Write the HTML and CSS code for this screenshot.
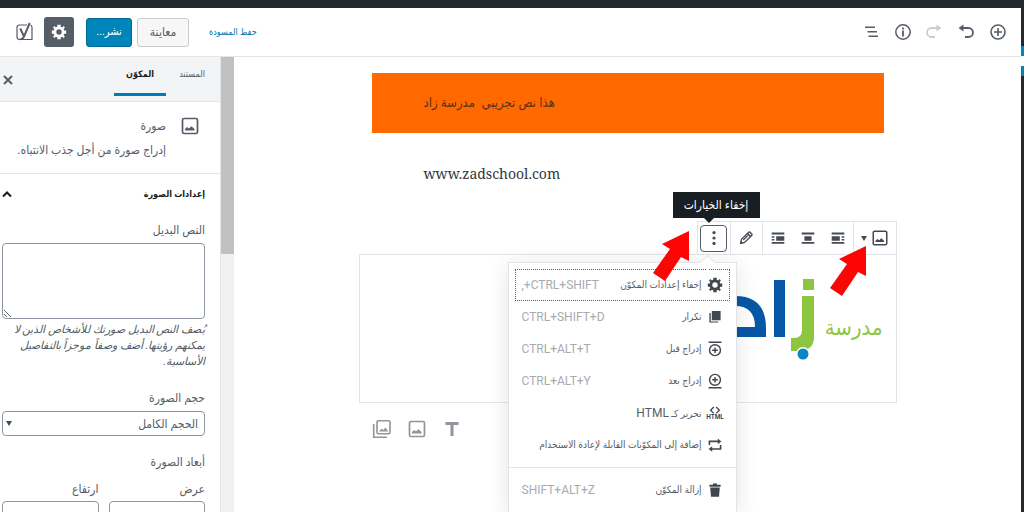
FILE: index.html
```html
<!DOCTYPE html>
<html lang="ar" dir="rtl">
<head>
<meta charset="utf-8">
<title>تحرير المقالة</title>
<link rel="stylesheet" href="styles.css">
</head>
<body>
<svg class="sprite" aria-hidden="true">
  <symbol id="gear" viewBox="0 0 20 20"><path fill-rule="evenodd" d="M18 12h-2.200c-.2.6-.4 1.100-.7 1.600l1.500 1.600-1.600 1.600-1.600-1.500c-.5.3-1 .5-1.500.7V18H8.100v-2.200c-.6-.1-1.100-.3-1.600-.6l-1.600 1.500-1.600-1.600 1.500-1.600c-.3-.5-.5-1-.6-1.600H2V8.200h2.200c.1-.6.3-1.100.6-1.600L3.300 5l1.600-1.600 1.600 1.500c.5-.3 1-.5 1.600-.6V2h3.800v2.300c.6.100 1.100.3 1.600.6l1.600-1.500L16.600 5l-1.500 1.600c.3.5.5 1 .6 1.600H18V12zM10 13a3 3 0 1 0 0-6 3 3 0 0 0 0 6z"/></symbol>
  <symbol id="image" viewBox="0 0 20 20"><rect x="2.500" y="2.500" width="15" height="15" rx="1.500" fill="none" stroke="currentColor" stroke-width="1.700"/><path d="M5 14.500v-1.500l2-2 2 1.500 2.500-2.200 3 2.700v1.500z"/></symbol>
  <symbol id="arrow" viewBox="0 0 38 50"><path fill="#fb0505" d="M36 0 9 13l8 5L0 42l12 8 16-24 8 4z"/></symbol>
</svg>
<div class="adminbar"></div>
<div class="shell">
  <div class="rail"><i></i><i></i></div>
  <div class="editor">
    <header class="topbar">
      <div class="tools">
        <button aria-label="إضافة مكوّن"><svg viewBox="0 0 20 20"><circle cx="10" cy="10" r="7" fill="none" stroke="currentColor" stroke-width="1.600"/><path d="M9.200 6h1.600v3.200H14v1.600h-3.200V14H9.200v-3.200H6V9.200h3.200z"/></svg></button>
        <button aria-label="تراجع"><svg viewBox="0 0 20 20"><path d="M7.500 2.500v7L2.500 6z"/><path d="M6 6h6.500a4.200 4.200 0 0 1 0 9H9" fill="none" stroke="currentColor" stroke-width="1.800"/></svg></button>
        <button class="disabled" aria-label="إعادة"><svg viewBox="0 0 20 20"><path d="M12.500 2.500v7l5-3.500z"/><path d="M14 6H7.500a4.200 4.200 0 0 0 0 9H11" fill="none" stroke="currentColor" stroke-width="1.800"/></svg></button>
        <button aria-label="معلومات"><svg viewBox="0 0 20 20"><circle cx="11" cy="10" r="7.200" fill="none" stroke="currentColor" stroke-width="1.500"/><path d="M10.100 5.500h1.800v1.900h-1.800zM10.100 8.500h1.800v6h-1.800z"/></svg></button>
        <button aria-label="تصفح المكوّنات"><svg viewBox="0 0 20 20"><path d="M5 4.500h10V6H5zM7.500 9H17v1.500H7.500zM8.500 13.500H18V15H8.500z"/></svg></button>
      </div>
      <div class="actions">
        <a href="#">حفظ المسودة</a>
        <button class="btn preview">معاينة</button>
        <button class="btn publish">نشر...</button>
        <button class="settings" aria-label="الإعدادات"><svg><use href="#gear"/></svg></button>
        <button class="seo" aria-label="SEO"><svg viewBox="0 0 20 20"><path d="M13 3H5.500Q3 3 3 5.500v9Q3 17.500 5.500 17.500H18V5.500Q18 3.500 16.500 3" fill="none" stroke="currentColor" stroke-width="1.200"/><path d="m6.200 6.500 3.600 7.500M15.700 1 10 14.500Q9 17.200 6.300 17.200" fill="none" stroke="currentColor" stroke-width="2"/></svg></button>
      </div>
    </header>
    <div class="workspace">
      <main class="canvas">
        <p class="banner">هذا نص تجريبي &nbsp;مدرسة زاد</p>
        <p class="site" dir="ltr">www.zadschool.com</p>
        <section class="block">
          <div class="toolbar">
            <div class="group"><button class="switcher" aria-label="تغيير نوع المكوّن"><svg><use href="#image"/></svg><i class="caret"></i></button></div>
            <div class="group aligns">
              <button aria-label="محاذاة لليمين"><svg viewBox="0 0 20 20"><path d="M3 4h14v2H3zM3 8h9v5H3zM14 8h3v1.700h-3zM14 11h3v1.700h-3zM3 14.500h14v2H3z"/></svg></button>
              <button aria-label="توسيط"><svg viewBox="0 0 20 20"><path d="M3 4h14v2H3zM6 8h8v5H6zM3 14.500h14v2H3z"/></svg></button>
              <button aria-label="محاذاة لليسار"><svg viewBox="0 0 20 20"><path d="M3 4h14v2H3zM8 8h9v5H8zM3 8h3v1.700H3zM3 11h3v1.700H3zM3 14.500h14v2H3z"/></svg></button>
            </div>
            <div class="group"><button class="edit" aria-label="تحرير"><svg viewBox="0 0 20 20"><path d="m4 16 1-4.500 8-8q.7-.5 1.400 0l2.100 2.100q.5.700 0 1.400l-8 8z" fill="none" stroke="currentColor" stroke-width="1.500"/><path d="m11 5.500 1.200-1.200 3.500 3.500L14.500 9zM6.500 11.800l5-5 .9.900-5 5zM3.500 16.500l.8-3.500 2.700 2.700z"/></svg></button></div>
            <div class="group more">
              <button class="dots" aria-label="إخفاء الخيارات"><svg viewBox="0 0 20 20"><circle cx="10" cy="4" r="1.800"/><circle cx="10" cy="10" r="1.800"/><circle cx="10" cy="16" r="1.800"/></svg></button>
              <span class="tooltip">إخفاء الخيارات</span>
              <div class="menu">
                <div class="items">
                  <button class="focus"><svg><use href="#gear"/></svg><span>إخفاء إعدادات المكوّن</span><kbd>CTRL+SHIFT+,</kbd></button>
                  <button><svg viewBox="0 0 20 20"><path d="M6 2.500h11V14H6zM3 5h1.700v10.500H14V17H3z"/></svg><span>تكرار</span><kbd>CTRL+SHIFT+D</kbd></button>
                  <button><svg viewBox="0 0 20 20"><path d="M2 .5h16v2H2zM9.100 8h1.800v2.600h2.600v1.800h-2.600V15H9.100v-2.600H6.500v-1.800h2.600z"/><circle cx="10" cy="11.500" r="6.800" fill="none" stroke="currentColor" stroke-width="1.800"/></svg><span>إدراج قبل</span><kbd>CTRL+ALT+T</kbd></button>
                  <button><svg viewBox="0 0 20 20"><path d="M2 17.500h16v2H2zM9.100 5h1.800v2.600h2.600v1.800h-2.600V12H9.100V9.400H6.500V7.600h2.600z"/><circle cx="10" cy="8.500" r="6.800" fill="none" stroke="currentColor" stroke-width="1.800"/></svg><span>إدراج بعد</span><kbd>CTRL+ALT+Y</kbd></button>
                  <button><svg viewBox="0 0 20 20"><path d="m8.500 2.500-4 4 4 4M11.500 2.500l4 4-4 4" fill="none" stroke="currentColor" stroke-width="1.600"/><text x="10" y="18" text-anchor="middle">HTML</text></svg><span>تحرير كـ <b>HTML</b></span></button>
                  <button><svg viewBox="0 0 20 20"><path d="M3 10V5.500h11M17 10v5H6" fill="none" stroke="currentColor" stroke-width="2"/><path d="M13.500 2v7L18 5.500zM6.500 11.500v7L2 15z"/></svg><span>إضافة إلى المكوّنات القابلة لإعادة الاستخدام</span></button>
                </div>
                <div class="items">
                  <button><svg viewBox="0 0 20 20"><path d="M3 3.500h4.500V2h5v1.500H17v2.500H3zM4 7h12l-1 11.500H5z"/></svg><span>إزالة المكوّن</span><kbd>SHIFT+ALT+Z</kbd></button>
                </div>
              </div>
            </div>
          </div>
          <figure class="picture">
            <figcaption>مدرسة</figcaption>
            <svg class="mark" viewBox="0 0 80 86" role="img" aria-label="زاد">
              <g fill="#8cc63f"><rect x="68" y="1" width="11" height="11"/><path d="M67 18h12v41q0 14-16 14h-7V60h3q8 0 8-8z"/></g>
              <g fill="#0757a6"><rect x="39" y="2" width="11" height="57"/><path d="M0 18q31 0 31 32v9H0V49h20q0-21-20-21z"/></g>
              <circle cx="68" cy="76" r="7" fill="#fff"/><circle cx="68" cy="76" r="5.500" fill="#0b85c4"/>
            </svg>
          </figure>
          <svg class="pointer first"><use href="#arrow"/></svg>
          <svg class="pointer second"><use href="#arrow"/></svg>
        </section>
        <div class="inserters">
          <button aria-label="فقرة"><svg viewBox="0 0 20 20"><path d="M3.500 3h13v3h-5v11h-3V6h-5z"/></svg></button>
          <button aria-label="صورة"><svg><use href="#image"/></svg></button>
          <button aria-label="معرض"><svg viewBox="0 0 20 20"><rect x="5" y="1.800" width="13" height="13" rx="1.500" fill="none" stroke="currentColor" stroke-width="1.600"/><path d="M1.700 5v13.200H15" fill="none" stroke="currentColor" stroke-width="1.600"/><path d="m7 12.500 2.500-2.800 1.800 1.300 2-2.500 3 4z"/></svg></button>
        </div>
      </main>
      <aside class="sidebar">
        <div class="scroll"><i></i></div>
        <div class="panel">
          <nav class="tabs">
            <button>المستند</button>
            <button class="active">المكوّن</button>
            <button class="close" aria-label="إغلاق"><svg viewBox="0 0 10 10"><path d="m1 1 8 8M9 1 1 9" fill="none" stroke="currentColor" stroke-width="2"/></svg></button>
          </nav>
          <div class="card">
            <svg><use href="#image"/></svg>
            <div><h2>صورة</h2><p>إدراج صورة من أجل جذب الانتباه.</p></div>
          </div>
          <form class="form">
            <button type="button" class="heading">إعدادات الصورة<svg viewBox="0 0 10 10"><path d="m1 7.500 4-4 4 4" fill="none" stroke="currentColor" stroke-width="2"/></svg></button>
            <label for="alt">النص البديل</label>
            <textarea id="alt"></textarea>
            <p class="help">يُصف النص البديل صورتك للأشخاص الذين لا يمكنهم رؤيتها. أضف وصفاً موجزاً بالتفاصيل الأساسية.</p>
            <label for="size">حجم الصورة</label>
            <div class="select"><select id="size"><option>الحجم الكامل</option></select><i class="caret"></i></div>
            <p class="dims">أبعاد الصورة</p>
            <div class="pair">
              <div><label for="w">عرض</label><input id="w" type="text"></div>
              <div><label for="h">ارتفاع</label><input id="h" type="text"></div>
            </div>
          </form>
        </div>
      </aside>
    </div>
  </div>
</div>
</body>
</html>
```
FILE: styles.css
```css
* { box-sizing: border-box; }
body {
  margin: 0;
  height: 100vh;
  overflow: hidden;
  display: flex;
  flex-direction: column;
  background: #fff;
  color: #555d66;
  font: 12px/16px Roboto, "DejaVu Sans Condensed", "DejaVu Sans", sans-serif;
}
p, h2, figure { margin: 0; font-size: inherit; font-weight: normal; }
button, input, textarea, select { font: inherit; color: inherit; }
button { border: 0; padding: 0; background: none; display: flex; align-items: center; justify-content: center; }
svg { width: 20px; height: 20px; fill: currentColor; flex: none; display: block; }
.sprite { position: absolute; width: 0; height: 0; }
.adminbar { height: 8px; flex: none; background: #23282d; }
.shell { flex: 1; min-height: 0; display: flex; }
.rail { width: 3px; background: #23282d; padding-top: 38px; display: flex; flex-direction: column; gap: 10px; }
.rail i { height: 10px; background: #0085ba; box-shadow: 0 5px 0 #fff; }
.rail i + i { box-shadow: 0 -5px 0 #fff; }
.editor { flex: 1; min-width: 0; display: flex; flex-direction: column; }

.topbar { height: 49px; flex: none; display: flex; align-items: center; justify-content: space-between; padding: 0 13px 0 14px; border-bottom: 1px solid #e2e4e7; }
.tools { display: flex; gap: 12px; }
.disabled { color: #ccc; }
.actions { display: flex; align-items: center; }
.actions a { color: #0073aa; font-size: 9px; text-decoration: none; margin-left: 20px; }
.btn { height: 29px; border-radius: 3px; }
.preview { width: 52px; border: 1px solid #ccc; background: #f7f7f7; margin-left: 5px; }
.publish { width: 46px; background: #0085ba; border: 1px solid #006a95; color: #fff; font-size: 11px; margin-left: 12px; }
.settings { width: 30px; height: 30px; border-radius: 3px; background: #555d66; color: #fff; margin-left: 10px; }
.settings svg { width: 18px; height: 18px; }

.workspace { flex: 1; min-height: 0; display: flex; }
.canvas { flex: 1; min-width: 0; padding-top: 16px; }
.banner { max-width: 512px; margin: 0 auto; padding: 0 52px; background: #ff6900; color: #5b3218; font-size: 13px; line-height: 60px; text-align: left; }
.site { max-width: 408px; margin: 31px auto 0; font: 14px/20px "Noto Serif", "DejaVu Serif Condensed", "DejaVu Serif", serif; color: #32373c; }
.block { position: relative; max-width: 538px; margin: 37px auto 0; }
.toolbar { display: flex; width: fit-content; height: 33px; border: 1px solid #e2e4e7; border-bottom: 0; background: #fff; color: #444b54; }
.group { display: flex; align-items: center; border-left: 1px solid #e2e4e7; }
.group:last-child { border-left: 0; }
.group svg { width: 18px; height: 18px; }
.switcher { width: 42px; gap: 4px; }
.caret { border: 3px solid transparent; border-top: 5px solid #444b54; border-bottom: 0; }
.aligns { width: 91px; justify-content: space-around; }
.edit { width: 31px; }
.more { position: relative; width: 32px; justify-content: center; }
.dots { width: 27px; height: 27px; border: 1px solid #555d66; border-radius: 4px; }
.tooltip { position: absolute; bottom: 36px; left: 50%; margin-left: -41px; width: 87px; line-height: 26px; background: #191e23; color: #fff; text-align: center; white-space: nowrap; }
.tooltip::after { content: ""; position: absolute; top: 100%; left: 31px; border: 5px solid transparent; border-top-color: #191e23; border-bottom: 0; }
.menu { position: absolute; z-index: 1; top: 40px; right: -7px; width: 229px; background: #fff; border: 1px solid #e2e4e7; box-shadow: 0 3px 20px rgba(25, 30, 35, .12); }
.menu::before { content: ""; position: absolute; top: -6px; right: 23px; width: 10px; height: 10px; background: #fff; border: 1px solid #e2e4e7; border-width: 1px 0 0 1px; transform: rotate(45deg); }
.items { padding: 6px; }
.items + .items { border-top: 1px solid #e2e4e7; }
.items button { width: 100%; height: 32px; padding: 0 7px; gap: 5px; justify-content: flex-start; color: #555d66; }
.items svg { width: 16px; height: 16px; color: #40464d; overflow: visible; }
.items .focus svg { width: 18px; height: 18px; margin: 0 -1px; }
.items span { font-size: 10px; white-space: nowrap; }
.items b { font-size: 12px; font-weight: normal; }
.items kbd { font: inherit; margin-right: auto; color: #a8abae; }
.items .focus { outline: 1px dotted #555d66; outline-offset: -1px; }
.items text { font: bold 8px Roboto, sans-serif; }

.picture { height: 149px; border: 1px solid #e2e4e7; display: flex; padding: 23px 13px 0 0; gap: 10px; }
.picture figcaption { font: 22px/24px "DejaVu Sans Condensed", "DejaVu Sans", sans-serif; color: #8cc63f; margin-top: 38px; }
.mark { width: 80px; height: 86px; }
.pointer { position: absolute; z-index: 2; width: 38px; height: 50px; }
.first { top: 10px; right: 206px; }
.second { top: 25px; right: 29px; }
.inserters { max-width: 538px; margin: 16px auto 0; padding-left: 13px; display: flex; justify-content: flex-end; gap: 15px; color: #8f959b; }

.sidebar { width: 234px; display: flex; }
.scroll { width: 13px; background: #f1f1f1; }
.scroll i { display: block; height: 197px; background: #c1c1c1; }
.panel { flex: 1; min-width: 0; border-right: 1px solid #e2e4e7; overflow: hidden; }
.tabs { display: flex; height: 45px; padding: 0 2px 0 3px; background: #f3f4f5; border-bottom: 1px solid #e2e4e7; font-size: 9px; }
.tabs button { width: 52px; height: 39px; padding-bottom: 2px; border-bottom: 3px solid transparent; }
.tabs .active { color: #191e23; font-weight: bold; border-color: #007cba; }
.tabs .close { width: 10px; height: 45px; margin-right: auto; padding: 0; border: 0; }
.close svg, .heading svg { width: 10px; height: 10px; }
.card { display: flex; gap: 14px; padding: 16px 20px 14px 0; height: 72px; border-bottom: 1px solid #e2e4e7; }
.card svg { margin-top: -2px; }
.card p { margin-top: 8px; white-space: nowrap; }
.form { padding: 12px 15px 0 2px; }
.heading { width: 100%; justify-content: space-between; color: #191e23; font-size: 9px; font-weight: bold; height: 16px; }
.form label { display: block; margin-top: 20px; font-weight: 500; }
textarea { display: block; width: 100%; height: 76px; margin-top: 5px; border: 1px solid #8d96a0; border-radius: 4px; resize: vertical; }
.help { font-size: 11px; font-style: italic; margin-top: 3px; }
.select { position: relative; margin-top: 5px; }
select { display: block; width: 100%; height: 25px; padding: 0 6px; border: 1px solid #8d96a0; border-radius: 4px; background: #fff; appearance: none; }
.select .caret { position: absolute; left: 4px; top: 10px; }
.dims { margin-top: 18px; }
.pair { display: flex; gap: 10px; }
.pair div { flex: 1; min-width: 0; }
.pair label { margin-top: 11px; }
input { display: block; width: 100%; height: 26px; margin-top: 4px; border: 1px solid #8d96a0; border-radius: 4px; }
```
